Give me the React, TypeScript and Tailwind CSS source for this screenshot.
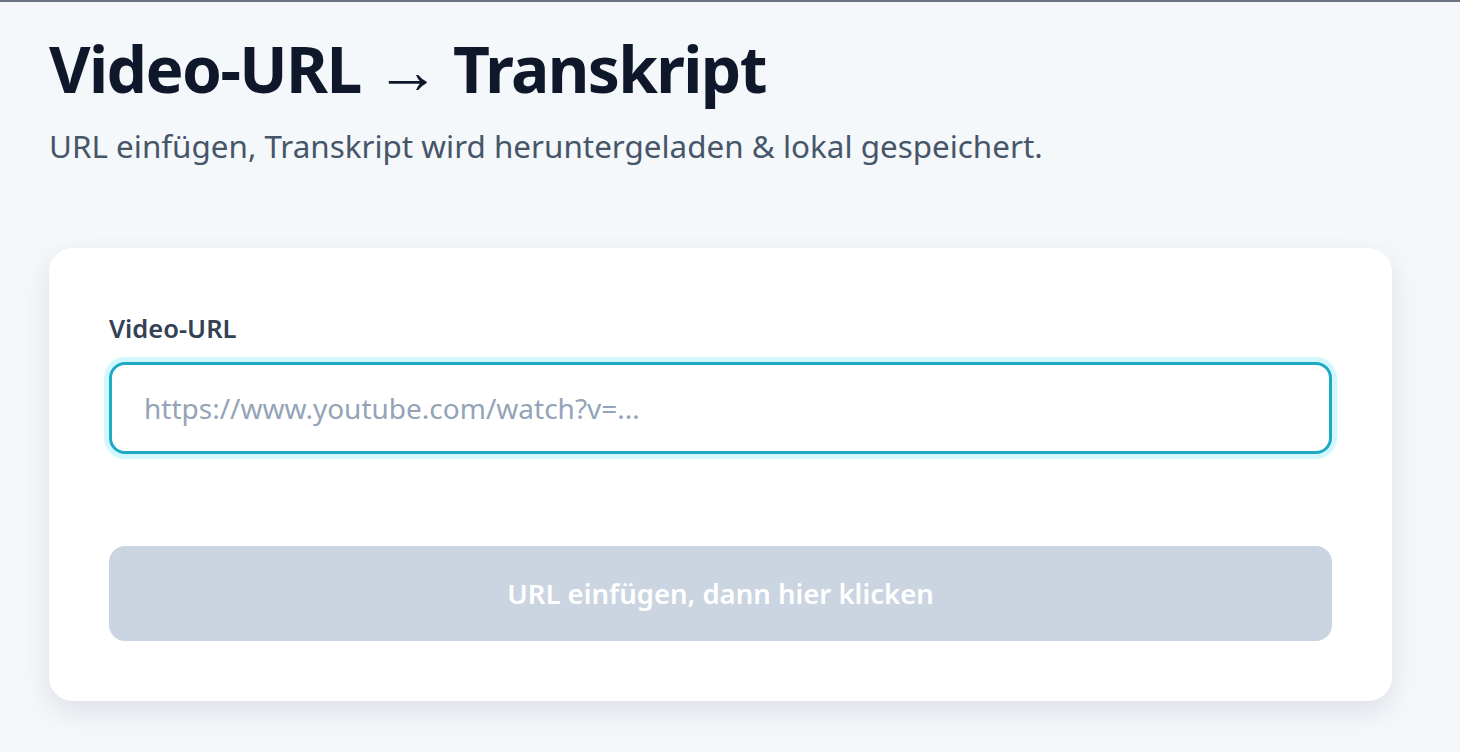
export default function App() {
  return (
    <div
      className="min-h-screen w-full bg-[#f4f8fb] border-t-2 border-[#6b7280]"
      style={{ fontFamily: '"Noto Sans", "Open Sans", sans-serif' }}
    >
      <main className="flex flex-col pl-[49px] pr-[68px] pt-[29px]">
        <h1 className="text-[64px] leading-[76px] font-bold tracking-[-1.6px] text-[#0f172a]">
          Video-URL → Transkript
        </h1>
        <p className="mt-[19px] text-[31.4px] leading-[40px] text-[#475569]">
          URL einfügen, Transkript wird heruntergeladen &amp; lokal gespeichert.
        </p>

        <section className="mt-[82px] rounded-[24px] bg-white px-[60px] pt-[64px] pb-[60px] shadow-[0_10px_28px_rgba(15,23,42,0.10)]">
          <label className="block text-[25.5px] leading-[32px] font-semibold text-[#334155]">
            Video-URL
          </label>
          <input
            type="text"
            placeholder="https://www.youtube.com/watch?v=..."
            className="mt-[18px] block h-[92px] w-full rounded-[16px] border-[3px] border-[#1ea9c4] bg-white px-[32px] text-[28px] text-[#0f172a] outline-none shadow-[0_0_0_5px_rgba(103,232,249,0.3)] placeholder:text-[#94a3b8]"
          />
          <button
            type="button"
            disabled
            className="mt-[92px] flex h-[95px] w-full items-center justify-center rounded-[16px] bg-[#cbd5e1] text-[27.5px] font-semibold text-white"
          >
            URL einfügen, dann hier klicken
          </button>
        </section>
      </main>
    </div>
  );
}
